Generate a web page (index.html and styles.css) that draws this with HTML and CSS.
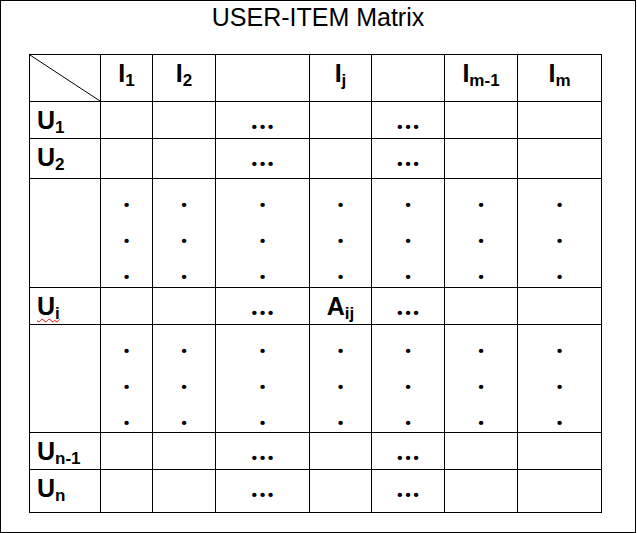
FILE: index.html
```html
<!DOCTYPE html>
<html lang="en">
<head>
<meta charset="utf-8">
<title>USER-ITEM Matrix</title>
<link rel="stylesheet" href="styles.css">
</head>
<body>
<div class="frame">
  <h1 class="title">USER-ITEM Matrix</h1>
  <div class="matrix">
    <div class="cell corner"><svg class="diag" viewBox="0 0 70 46" preserveAspectRatio="none"><line x1="0" y1="0" x2="70" y2="46"/></svg></div>
    <div class="cell head">I<sub>1</sub></div>
    <div class="cell head">I<sub>2</sub></div>
    <div class="cell head"></div>
    <div class="cell head">I<sub>j</sub></div>
    <div class="cell head"></div>
    <div class="cell head">I<sub>m-1</sub></div>
    <div class="cell head">I<sub>m</sub></div>

    <div class="cell label">U<sub>1</sub></div>
    <div class="cell"></div>
    <div class="cell"></div>
    <div class="cell ell">...</div>
    <div class="cell"></div>
    <div class="cell ell">...</div>
    <div class="cell"></div>
    <div class="cell"></div>

    <div class="cell label">U<sub>2</sub></div>
    <div class="cell"></div>
    <div class="cell"></div>
    <div class="cell ell">...</div>
    <div class="cell"></div>
    <div class="cell ell">...</div>
    <div class="cell"></div>
    <div class="cell"></div>

    <div class="cell"></div>
    <div class="cell vdots">.<br>.<br>.</div>
    <div class="cell vdots">.<br>.<br>.</div>
    <div class="cell vdots">.<br>.<br>.</div>
    <div class="cell vdots">.<br>.<br>.</div>
    <div class="cell vdots">.<br>.<br>.</div>
    <div class="cell vdots">.<br>.<br>.</div>
    <div class="cell vdots">.<br>.<br>.</div>

    <div class="cell label"><span class="typo">U<sub>i</sub></span></div>
    <div class="cell"></div>
    <div class="cell"></div>
    <div class="cell ell">...</div>
    <div class="cell head">A<sub>ij</sub></div>
    <div class="cell ell">...</div>
    <div class="cell"></div>
    <div class="cell"></div>

    <div class="cell"></div>
    <div class="cell vdots">.<br>.<br>.</div>
    <div class="cell vdots">.<br>.<br>.</div>
    <div class="cell vdots">.<br>.<br>.</div>
    <div class="cell vdots">.<br>.<br>.</div>
    <div class="cell vdots">.<br>.<br>.</div>
    <div class="cell vdots">.<br>.<br>.</div>
    <div class="cell vdots">.<br>.<br>.</div>

    <div class="cell label">U<sub>n-1</sub></div>
    <div class="cell"></div>
    <div class="cell"></div>
    <div class="cell ell">...</div>
    <div class="cell"></div>
    <div class="cell ell">...</div>
    <div class="cell"></div>
    <div class="cell"></div>

    <div class="cell label">U<sub>n</sub></div>
    <div class="cell"></div>
    <div class="cell"></div>
    <div class="cell ell">...</div>
    <div class="cell"></div>
    <div class="cell ell">...</div>
    <div class="cell"></div>
    <div class="cell"></div>
  </div>
</div>
</body>
</html>
```

FILE: styles.css
```css
html, body {
  margin: 0;
  padding: 0;
  background: #fff;
}

.frame {
  box-sizing: border-box;
  width: 636px;
  height: 533px;
  border: 1px solid #000;
  background: #fff;
  font-family: "Liberation Sans", Arial, sans-serif;
  color: #000;
}

.title {
  margin: 0;
  padding-top: 1px;
  font-size: 25px;
  font-weight: normal;
  line-height: 30px;
  text-align: center;
}

.matrix {
  display: grid;
  width: max-content;
  margin: 22px 0 0 28px;
  padding: 1px;
  gap: 1px;
  background: #000;
  grid-template-columns: 70px 51px 62px 93px 61px 72px 72px 83px;
  grid-template-rows: 46px 36px 39px 108px 36px 107px 36px 42px;
}

.cell {
  background: #fff;
  font-size: 25px;
  font-weight: bold;
  line-height: 30px;
  padding-top: 3px;
  box-sizing: border-box;
  overflow: hidden;
}

.corner {
  padding: 0;
}

.diag {
  display: block;
  width: 100%;
  height: 100%;
}

.diag line {
  stroke: #000;
  stroke-width: 1;
  vector-effect: non-scaling-stroke;
}

.head {
  text-align: center;
}

.label {
  padding-left: 7px;
}

.ell {
  font-family: "Open Sans", "Liberation Sans", sans-serif;
  text-align: center;
  letter-spacing: 1px;
  padding-top: 2px;
  padding-left: 1px;
}

.vdots {
  font-family: "Open Sans", "Liberation Sans", sans-serif;
  padding-top: 0;
  line-height: 36px;
  text-align: center;
}

sub {
  font-size: 17px;
  line-height: 1;
  vertical-align: -4px;
}

.typo {
  text-decoration: underline wavy #e00000;
  text-decoration-thickness: 1px;
  text-underline-offset: 3px;
  text-decoration-skip-ink: none;
}
```
